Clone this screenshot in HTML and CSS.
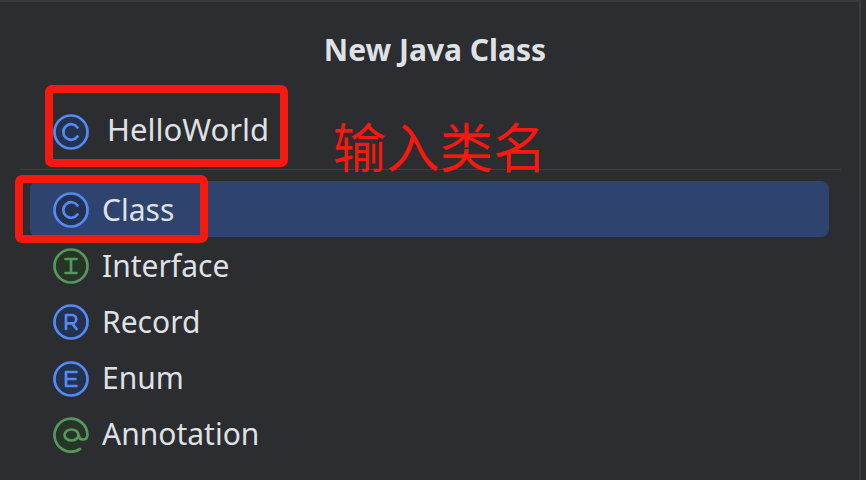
FILE: index.html
```html
<!DOCTYPE html>
<html lang="zh">
<head>
<meta charset="utf-8">
<title>New Java Class</title>
<link rel="stylesheet" href="styles.css">
</head>
<body>
<div class="dialog">
  <h1 class="title">New Java Class</h1>
  <div class="name-row">
    <svg class="icon name-icon" viewBox="0 0 36 36"><circle class="ring-blue fill-blue" cx="18" cy="18" r="16.500"/><path class="glyph-blue" d="M24.500 13.500a7.800 7.800 0 1 0 0 9"/></svg>
    <span class="name">HelloWorld</span>
    <span class="note">输入类名</span>
    <span class="mark mark-name"></span>
  </div>
  <div class="divider"></div>
  <ul class="list">
    <li class="item selected">
      <svg class="icon" viewBox="0 0 36 36"><circle class="ring-blue fill-blue" cx="18" cy="18" r="16.500"/><path class="glyph-blue" d="M24.500 13.500a7.800 7.800 0 1 0 0 9"/></svg>
      <span class="label">Class</span>
      <span class="mark mark-class"></span>
    </li>
    <li class="item">
      <svg class="icon" viewBox="0 0 36 36"><circle class="ring-green fill-green" cx="18" cy="18" r="16.500"/><path class="glyph-green" d="M12.500 11h11M18 11v14M12.500 25h11"/></svg>
      <span class="label">Interface</span>
    </li>
    <li class="item">
      <svg class="icon" viewBox="0 0 36 36"><circle class="ring-blue fill-blue" cx="18" cy="18" r="16.500"/><path class="glyph-blue" d="M13 25V11h6a4.200 4.200 0 0 1 0 8.400h-6M19 19.400 23.500 25"/></svg>
      <span class="label">Record</span>
    </li>
    <li class="item">
      <svg class="icon" viewBox="0 0 36 36"><circle class="ring-blue fill-blue" cx="18" cy="18" r="16.500"/><path class="glyph-blue" d="M23.500 11H13v14h10.500M13 18h9.500"/></svg>
      <span class="label">Enum</span>
    </li>
    <li class="item">
      <svg class="icon" viewBox="0 0 36 36"><path class="ring-green fill-green" d="M27 32a16.500 16.500 0 1 1 7.500-14.500c0 3-1.500 5-4.500 5-2.500 0-4-1.500-4-3.500"/><ellipse class="ring-green" cx="18.500" cy="18" rx="7" ry="5.500"/></svg>
      <span class="label">Annotation</span>
    </li>
  </ul>
</div>
</body>
</html>
```
FILE: styles.css
```css
* { box-sizing: border-box; }
html, body { margin: 0; height: 100%; background: #2b2d30; }
body { width: 866px; height: 480px; overflow: hidden; font-family: "Noto Sans", "Open Sans", sans-serif; color: #dfe1e5; }
.dialog { width: 861px; height: 480px; padding-top: 2px; border-top: 2px solid #3a3b3e; border-right: 2px solid #3a3b3e; display: flex; flex-direction: column; }
.title { margin: 0; padding-top: 29px; height: 60px; text-align: center; font-size: 30px; line-height: 34px; font-weight: 700; color: #dfe1e5; width: 870px; }
.name-row { position: relative; height: 105px; padding: 50px 0 0 53px; display: flex; align-items: flex-start; }
.icon { width: 36px; height: 36px; flex: none; }
.name-row .name { margin: -1px 0 0 18px; font-size: 31px; line-height: 32px; }
.note { position: absolute; left: 333px; top: 51px; font-family: "Noto Sans CJK SC", sans-serif; font-size: 53.500px; line-height: 60px; color: #f5190f; }
.divider { margin-left: 20px; width: 821px; height: 1px; background: #3d3f43; }
.list { list-style: none; margin: 11px 0 0 30px; padding: 0; width: 799px; }
.item { position: relative; height: 56.200px; padding: 2px 0 0 23px; display: flex; align-items: center; gap: 13px; font-size: 30px; border-radius: 8px; }
.label { margin-bottom: 2px; }
.selected { background: #2e436e; }
.ring-blue, .ring-green, .glyph-blue, .glyph-green { fill: none; stroke-width: 2.700; stroke-linecap: round; stroke-linejoin: round; }
.ring-blue, .glyph-blue { stroke: #548af7; }
.ring-green, .glyph-green { stroke: #57965c; }
.fill-blue { fill: #25324d; }
.fill-green { fill: #253627; }
.mark { position: absolute; border: 8px solid #f5190f; border-radius: 7px; }
.mark-name { left: 45px; top: 21px; width: 243px; height: 82px; }
.mark-class { left: -15px; top: -6px; width: 193px; height: 68px; }
```
